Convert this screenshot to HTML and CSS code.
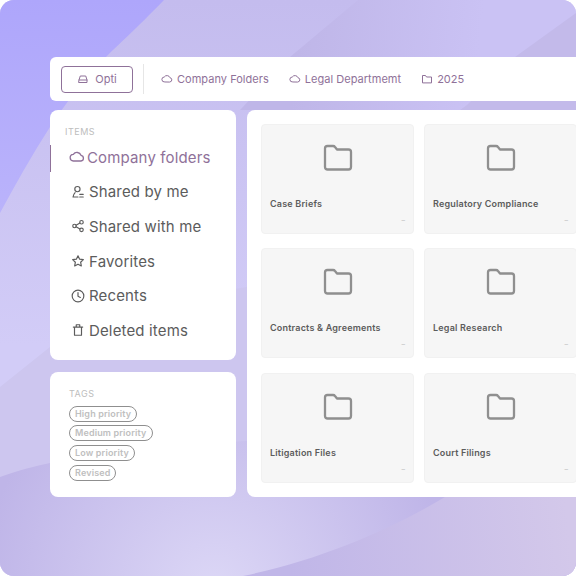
FILE: index.html
```html
<!DOCTYPE html>
<html lang="en">
<head>
  <meta charset="UTF-8">
  <meta name="viewport" content="width=device-width, initial-scale=1.0">
  <title>Folders</title>
  <link rel="stylesheet" href="styles.css">
</head>
<body>
  <!-- background waves -->
  <svg class="bg" width="576" height="576" viewBox="0 0 576 576">
    <defs>
      <linearGradient id="base" x1="0" y1="0" x2="0" y2="1">
        <stop offset="0" stop-color="#c4bcee"/>
        <stop offset="0.6" stop-color="#d2ccf7"/>
      </linearGradient>
      <linearGradient id="corner" x1="0" y1="0" x2="0" y2="1">
        <stop offset="0" stop-color="#aea6fb"/>
        <stop offset="1" stop-color="#bab3fb"/>
      </linearGradient>
      <linearGradient id="band" gradientUnits="userSpaceOnUse" x1="300" y1="20" x2="480" y2="40">
        <stop offset="0" stop-color="#bfb6e8"/>
        <stop offset="1" stop-color="#cac2f4"/>
      </linearGradient>
      <radialGradient id="low" gradientUnits="userSpaceOnUse" cx="215" cy="590" r="235">
        <stop offset="0" stop-color="#dcd7f6"/>
        <stop offset="1" stop-color="#bfb5e8"/>
      </radialGradient>
      <linearGradient id="wave" gradientUnits="userSpaceOnUse" x1="290" y1="570" x2="570" y2="540">
        <stop offset="0" stop-color="#c0b6e8"/>
        <stop offset="1" stop-color="#d3c8ea"/>
      </linearGradient>
    </defs>
    <rect width="576" height="576" fill="url(#base)"/>
    <path d="M0 0H164C135 30 118 45 106 57C85 78 68 100 50 127C32 155 15 185 0 213Z" fill="url(#corner)"/>
    <path d="M358 0L290 57L240 110H576V0Z" fill="url(#band)"/>
    <path d="M576 13L515 57L467 105L460 110H576Z" fill="#c3baea"/>
    <path d="M0 387L50 347C200 260 400 300 576 200V576H0Z" fill="#cdc6ef"/>
    <path d="M0 477C20 470 35 466 50 463C200 430 400 450 576 400V576H0Z" fill="url(#low)"/>
    <path d="M243 576C320 560 390 530 445 497L480 470H576V576Z" fill="url(#wave)"/>
  </svg>

  <div class="app">
    <div class="topbar">
      <button class="opti">
        <svg class="ic" width="12" height="12" viewBox="0 0 24 24"><path d="M4 14l2.500-8h11l2.500 8v5H4zM4 14h16"/></svg>
        Opti
      </button>
      <div class="sep"></div>
      <a class="crumb">
        <svg class="ic" width="12" height="12" viewBox="0 0 24 24"><path d="M7 18a5 5 0 0 1-.5-10A6.500 6.500 0 0 1 18 9.500a4.300 4.300 0 0 1 0 8.500z"/></svg>
        Company Folders
      </a>
      <a class="crumb">
        <svg class="ic" width="12" height="12" viewBox="0 0 24 24"><path d="M7 18a5 5 0 0 1-.5-10A6.500 6.500 0 0 1 18 9.500a4.300 4.300 0 0 1 0 8.500z"/></svg>
        Legal Departmemt
      </a>
      <a class="crumb">
        <svg class="ic" width="12" height="12" viewBox="0 0 24 24"><path d="M3 19V5h6l2 3h10v11z"/></svg>
        2025
      </a>
    </div>

    <div class="columns">
      <div class="side">
        <div class="box items">
          <div class="label">ITEMS</div>
          <a class="item active">
            <svg class="ic" width="16" height="16" viewBox="0 0 24 24"><path d="M7 18a5 5 0 0 1-.5-10A6.500 6.500 0 0 1 18 9.500a4.300 4.300 0 0 1 0 8.500z"/></svg>
            Company folders
          </a>
          <a class="item">
            <svg class="ic" width="14" height="14" viewBox="0 0 24 24"><circle cx="11" cy="7" r="4.500"/><path d="M7 13c-2 2-3 4-3.500 7.500H12M15 16h6M15 20.500h6"/></svg>
            Shared by me
          </a>
          <a class="item">
            <svg class="ic" width="14" height="14" viewBox="0 0 24 24"><circle cx="18" cy="5.500" r="3"/><circle cx="6" cy="12" r="3"/><circle cx="18" cy="18.500" r="3"/><path d="M8.700 10.600l6.600-3.700M8.700 13.400l6.600 3.700"/></svg>
            Shared with me
          </a>
          <a class="item">
            <svg class="ic" width="14" height="14" viewBox="0 0 24 24"><path d="M12 3l2.800 5.900 6.400.8-4.700 4.400 1.200 6.400-5.700-3.100-5.700 3.100 1.200-6.400-4.700-4.400 6.400-.8z"/></svg>
            Favorites
          </a>
          <a class="item">
            <svg class="ic" width="14" height="14" viewBox="0 0 24 24"><circle cx="12" cy="12" r="10"/><path d="M12 6v6.500l4 2"/></svg>
            Recents
          </a>
          <a class="item">
            <svg class="ic" width="14" height="14" viewBox="0 0 24 24"><path d="M6 7h12v14H6zM4 7h16M9 7V3h6v4"/></svg>
            Deleted items
          </a>
        </div>
        <div class="box tags">
          <div class="label">TAGS</div>
          <span class="tag">High priority</span>
          <span class="tag">Medium priority</span>
          <span class="tag">Low priority</span>
          <span class="tag">Revised</span>
        </div>
      </div>

      <div class="panel">
        <div class="card">
          <svg class="folder" width="32" height="32" viewBox="0 0 32 32"><path d="M3 6.500C3 5 4 4 5.500 4H11c1 0 1.500.3 2 1l2 2.500h11.500C28 7.500 29 8.500 29 10v15c0 1.500-1 2.500-2.500 2.500h-21C4 27.500 3 26.500 3 25z"/></svg>
          <div class="name">Case Briefs</div>
          <div class="dash">–</div>
        </div>
        <div class="card">
          <svg class="folder" width="32" height="32" viewBox="0 0 32 32"><path d="M3 6.500C3 5 4 4 5.500 4H11c1 0 1.500.3 2 1l2 2.500h11.500C28 7.500 29 8.500 29 10v15c0 1.500-1 2.500-2.500 2.500h-21C4 27.500 3 26.500 3 25z"/></svg>
          <div class="name">Regulatory Compliance</div>
          <div class="dash">–</div>
        </div>
        <div class="card">
          <svg class="folder" width="32" height="32" viewBox="0 0 32 32"><path d="M3 6.500C3 5 4 4 5.500 4H11c1 0 1.500.3 2 1l2 2.500h11.500C28 7.500 29 8.500 29 10v15c0 1.500-1 2.500-2.500 2.500h-21C4 27.500 3 26.500 3 25z"/></svg>
          <div class="name">Contracts &amp; Agreements</div>
          <div class="dash">–</div>
        </div>
        <div class="card">
          <svg class="folder" width="32" height="32" viewBox="0 0 32 32"><path d="M3 6.500C3 5 4 4 5.500 4H11c1 0 1.500.3 2 1l2 2.500h11.500C28 7.500 29 8.500 29 10v15c0 1.500-1 2.500-2.500 2.500h-21C4 27.500 3 26.500 3 25z"/></svg>
          <div class="name">Legal Research</div>
          <div class="dash">–</div>
        </div>
        <div class="card">
          <svg class="folder" width="32" height="32" viewBox="0 0 32 32"><path d="M3 6.500C3 5 4 4 5.500 4H11c1 0 1.500.3 2 1l2 2.500h11.500C28 7.500 29 8.500 29 10v15c0 1.500-1 2.500-2.500 2.500h-21C4 27.500 3 26.500 3 25z"/></svg>
          <div class="name">Litigation Files</div>
          <div class="dash">–</div>
        </div>
        <div class="card">
          <svg class="folder" width="32" height="32" viewBox="0 0 32 32"><path d="M3 6.500C3 5 4 4 5.500 4H11c1 0 1.500.3 2 1l2 2.500h11.500C28 7.500 29 8.500 29 10v15c0 1.500-1 2.500-2.500 2.500h-21C4 27.500 3 26.500 3 25z"/></svg>
          <div class="name">Court Filings</div>
          <div class="dash">–</div>
        </div>
      </div>
    </div>
  </div>
</body>
</html>
```

FILE: styles.css
```css
html, body {
  margin: 0;
  height: 576px;
  overflow: hidden;
}
body {
  font-family: Inter, "Noto Sans", sans-serif;
  position: relative;
  background-color: #ffffff;
}
.bg {
  position: absolute;
  top: 0;
  left: 0;
  border-radius: 14px;
}
.ic {
  fill: none;
  stroke: currentColor;
  stroke-width: 2;
  stroke-linejoin: round;
  stroke-linecap: round;
  flex-shrink: 0;
}
.app {
  position: relative;
  width: 540px;
  padding: 57px 0 0 50px;
}
.topbar {
  display: flex;
  align-items: center;
  height: 44px;
  padding-left: 11px;
  background-color: #ffffff;
  border-radius: 6px 0 0 6px;
  color: #8f7199;
  font-size: 11px;
  letter-spacing: 0.03px;
}
.opti {
  display: flex;
  align-items: center;
  justify-content: center;
  gap: 6px;
  width: 72px;
  height: 27px;
  padding: 0;
  background: none;
  border: 1px solid #8f7199;
  border-radius: 4px;
  color: #8f7199;
  font: inherit;
}
.sep {
  width: 1px;
  height: 30px;
  margin: 0 17px 0 10px;
  background-color: #e6e6e6;
}
.crumb {
  display: flex;
  align-items: center;
  gap: 4px;
  margin-right: 20px;
}
.columns {
  display: flex;
  gap: 11px;
  margin-top: 9px;
}
.side {
  display: flex;
  flex-direction: column;
  gap: 12px;
  width: 186px;
}
.box {
  background-color: #ffffff;
  border-radius: 8px;
  box-sizing: border-box;
}
.items {
  position: relative;
  height: 250px;
  padding: 16px 0 0 15px;
}
.label {
  font-size: 9px;
  letter-spacing: 0.5px;
  color: #bdbdbd;
}
.items .label {
  margin-bottom: 3px;
}
.item {
  display: flex;
  align-items: center;
  gap: 4px;
  height: 34.600px;
  padding-left: 6px;
  font-size: 15px;
  letter-spacing: 0.15px;
  color: #5c5c5c;
}
.item.active {
  gap: 2px;
  padding-left: 4px;
  color: #8f7199;
}
.item.active::before {
  content: "";
  position: absolute;
  left: 0;
  top: 35px;
  width: 1px;
  height: 27px;
  background-color: #8f7199;
}
.tags {
  display: flex;
  flex-direction: column;
  align-items: flex-start;
  gap: 3.700px;
  height: 125px;
  padding: 16px 0 0 19px;
}
.tags .label {
  margin-bottom: 3px;
}
.tag {
  padding: 1px 5px;
  border: 1px solid #8f8f8f;
  border-radius: 8px;
  font-size: 9px;
  font-weight: 600;
  line-height: 12px;
  letter-spacing: 0.15px;
  color: #c0c0c0;
}
.panel {
  display: grid;
  grid-template-columns: 153px 153px;
  grid-auto-rows: 110px;
  gap: 14.400px 10px;
  width: 329px;
  height: 387px;
  box-sizing: border-box;
  padding: 14px;
  background-color: #ffffff;
  border-radius: 8px 0 0 8px;
  margin-right: -40px;
}
.card {
  position: relative;
  background-color: #f6f6f6;
  border: 1px solid #f1f1f1;
  border-radius: 4px;
  box-sizing: border-box;
}
.folder {
  display: block;
  margin: 17px auto 0;
  fill: none;
  stroke: #8f8f8f;
  stroke-width: 2.300;
  stroke-linejoin: round;
}
.name {
  position: absolute;
  left: 8px;
  top: 73px;
  font-size: 9px;
  font-weight: 600;
  letter-spacing: 0.2px;
  color: #5c5c5c;
}
.dash {
  position: absolute;
  right: 8px;
  bottom: 8px;
  font-size: 7px;
  color: #bdbdbd;
}
```
